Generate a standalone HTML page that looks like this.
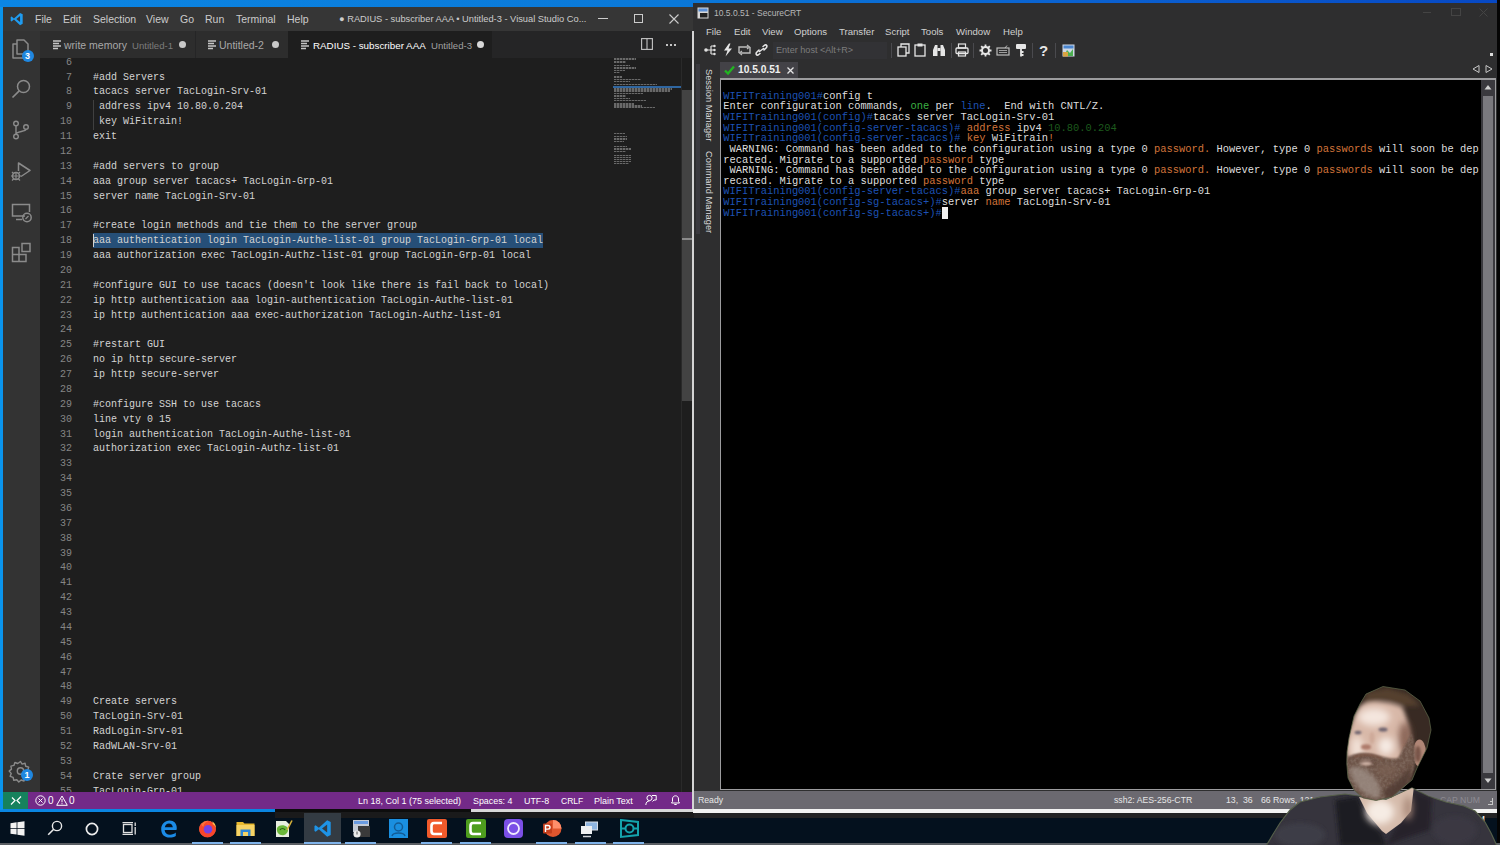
<!DOCTYPE html>
<html><head><meta charset="utf-8">
<style>
*{margin:0;padding:0;box-sizing:border-box}
html,body{width:1500px;height:845px;overflow:hidden;background:#0b1520;font-family:"Liberation Sans",sans-serif}
.a{position:absolute}
.ui{font-family:"Liberation Sans",sans-serif;white-space:pre;line-height:1}
svg{position:absolute;overflow:visible}
#topband{left:0;top:0;width:1500px;height:8px;background:linear-gradient(90deg,#0b86e4 0%,#0a78d8 45%,#0a5fd0 75%,#0748c4 100%)}
#vsleft{left:0;top:7px;width:2.5px;height:803px;background:#0a94ec}
#vstitle{left:3px;top:7px;width:690px;height:24px;background:#363636}
#vsact{left:3px;top:31px;width:37px;height:761px;background:#333333}
#vstabs{left:40px;top:31px;width:652px;height:27px;background:#252526}
#vsed{left:40px;top:58px;width:652px;height:734px;background:#1e1e1e;overflow:hidden}
#vsstatus{left:3px;top:792px;width:689px;height:17px;background:#732a88}
#crt{left:693px;top:3px;width:804px;height:810px;background:#2e2e2f}
#term{left:721px;top:80px;width:760px;height:709px;background:#000}
#taskbar{left:0;top:812px;width:1500px;height:31px;background:#04111e}
.menu{color:#cccccc;font-size:10.5px}
.code{font-family:"Liberation Mono",monospace;font-size:10px;line-height:14.875px;white-space:pre;color:#d4d4d4}
.lnum{font-family:"Liberation Mono",monospace;font-size:10px;line-height:14.875px;white-space:pre;color:#858585;text-align:right}
.tm{font-family:"Liberation Mono",monospace;font-size:10.41px;line-height:10.64px;white-space:pre;color:#dedede}
.b{color:#1d52b4}.o{color:#d2743a}.g{color:#3cb043}.dg{color:#1d5a1d}

</style></head><body>
<div id="topband" class="a"></div>
<div id="taskbar" class="a"></div>
<div class="a" style="left:0;top:843px;width:1500px;height:2px;background:#5a5e63"></div>
<div class="a" style="left:0;top:808px;width:275px;height:4px;background:#0a86e2"></div>
<div class="a" style="left:275px;top:808px;width:196px;height:4px;background:#0d0d0d"></div>
<div class="a" style="left:471px;top:809px;width:222px;height:3px;background:#d8d8d8"></div>
<div class="a" style="left:1497px;top:0;width:3px;height:843px;background:#050505"></div>
<div class="a" style="left:275px;top:812px;width:420px;height:6px;background:#1a1a1b"></div>
<div class="a" style="left:694px;top:813px;width:803px;height:5px;background:#222224"></div>
<div id="vsleft" class="a"></div>
<div id="vstitle" class="a"></div>
<div id="vsact" class="a"></div>
<div id="vstabs" class="a"></div>
<div id="vsed" class="a"></div>
<div id="vsstatus" class="a"></div>
<!-- title bar -->
<svg style="left:9.5px;top:11.5px" width="14" height="14" viewBox="0 0 16 16"><path d="M11.5 1 L14.5 2.5 V13.5 L11.5 15 L4.5 8.6 L1.8 10.8 L0.8 10.2 V5.8 L1.8 5.2 L4.5 7.4 Z M11.5 4.6 L7.2 8 L11.5 11.4 Z" fill="#1f9cf0"/></svg>
<div class="a ui menu" style="left:35px;top:14px">File</div>
<div class="a ui menu" style="left:63px;top:14px">Edit</div>
<div class="a ui menu" style="left:93px;top:14px">Selection</div>
<div class="a ui menu" style="left:146px;top:14px">View</div>
<div class="a ui menu" style="left:180px;top:14px">Go</div>
<div class="a ui menu" style="left:205px;top:14px">Run</div>
<div class="a ui menu" style="left:236px;top:14px">Terminal</div>
<div class="a ui menu" style="left:287px;top:14px">Help</div>
<div class="a ui menu" style="left:339px;top:14.5px;font-size:9.3px">● RADIUS - subscriber AAA • Untitled-3 - Visual Studio Co...</div>
<div class="a" style="left:598px;top:18px;width:10px;height:1px;background:#cccccc"></div>
<div class="a" style="left:634px;top:14px;width:9px;height:9px;border:1px solid #cccccc"></div>
<svg style="left:669px;top:14px" width="10" height="10" viewBox="0 0 10 10"><path d="M0.5 0.5 L9.5 9.5 M9.5 0.5 L0.5 9.5" stroke="#cccccc" stroke-width="1.1"/></svg>
<!-- tabs -->
<div class="a" style="left:40px;top:31px;width:155px;height:27px;background:#2d2d2d"></div>
<div class="a" style="left:195px;top:31px;width:1px;height:27px;background:#252526"></div>
<div class="a" style="left:196px;top:31px;width:92px;height:27px;background:#2d2d2d"></div>
<div class="a" style="left:288px;top:31px;width:205px;height:27px;background:#1e1e1e"></div>
<div class="a" style="left:492px;top:31px;width:1px;height:27px;background:#252526"></div>
<svg style="left:53px;top:40px" width="9" height="10" viewBox="0 0 9 10"><path d="M0 1h8M0 3.5h6M0 6h8M0 8.5h5" stroke="#c5c5c5" stroke-width="1.3"/></svg>
<div class="a ui" style="left:64px;top:40px;font-size:10.5px;color:#a8a8a8">write memory</div>
<div class="a ui" style="left:132px;top:40.5px;font-size:9.6px;color:#7c7c7c">Untitled-1</div>
<div class="a" style="left:179px;top:41px;width:7px;height:7px;border-radius:50%;background:#c9c9c9"></div>
<svg style="left:208px;top:40px" width="9" height="10" viewBox="0 0 9 10"><path d="M0 1h8M0 3.5h6M0 6h8M0 8.5h5" stroke="#c5c5c5" stroke-width="1.3"/></svg>
<div class="a ui" style="left:219px;top:40px;font-size:10.5px;color:#a8a8a8">Untitled-2</div>
<div class="a" style="left:272px;top:41px;width:7px;height:7px;border-radius:50%;background:#c9c9c9"></div>
<svg style="left:301px;top:40px" width="9" height="10" viewBox="0 0 9 10"><path d="M0 1h8M0 3.5h6M0 6h8M0 8.5h5" stroke="#c5c5c5" stroke-width="1.3"/></svg>
<div class="a ui" style="left:313px;top:40.5px;font-size:9.8px;color:#ffffff">RADIUS - subscriber AAA</div>
<div class="a ui" style="left:431px;top:40.5px;font-size:9.6px;color:#a0a0a0">Untitled-3</div>
<div class="a" style="left:477px;top:41px;width:7px;height:7px;border-radius:50%;background:#d8d8d8"></div>
<svg style="left:641px;top:38px" width="12" height="12" viewBox="0 0 12 12"><rect x="0.6" y="0.6" width="10.8" height="10.8" fill="none" stroke="#c5c5c5" stroke-width="1.1"/><path d="M6 0.6V11.4" stroke="#c5c5c5" stroke-width="1.1"/></svg>
<div class="a" style="left:666px;top:43.5px;width:2px;height:2px;background:#c5c5c5;box-shadow:4px 0 0 #c5c5c5,8px 0 0 #c5c5c5"></div>
<!-- activity bar icons -->
<svg style="left:11px;top:39px" width="20" height="20" viewBox="0 0 20 20"><path d="M6 1 h7 l4 4 v10 h-11 z M6 5 h-4 v14 h11 v-4" fill="none" stroke="#8b8b8b" stroke-width="1.5" stroke-linejoin="round"/></svg>
<div class="a" style="left:21.5px;top:50px;width:12px;height:12px;border-radius:50%;background:#1f87e0"></div>
<div class="a ui" style="left:21.5px;top:52px;width:12px;text-align:center;font-size:9px;color:#fff;font-weight:bold">3</div>
<svg style="left:11px;top:79px" width="20" height="20" viewBox="0 0 20 20"><circle cx="12.5" cy="7.5" r="6" fill="none" stroke="#8b8b8b" stroke-width="1.5"/><path d="M8.2 11.8 L1.5 18.5" stroke="#8b8b8b" stroke-width="1.7"/></svg>
<svg style="left:11px;top:120px" width="20" height="20" viewBox="0 0 20 20"><circle cx="5" cy="3.5" r="2.3" fill="none" stroke="#8b8b8b" stroke-width="1.4"/><circle cx="5" cy="16.5" r="2.3" fill="none" stroke="#8b8b8b" stroke-width="1.4"/><circle cx="15" cy="7" r="2.3" fill="none" stroke="#8b8b8b" stroke-width="1.4"/><path d="M5 5.8 V14.2 M15 9.3 C15 12 5 11 5 14.2" fill="none" stroke="#8b8b8b" stroke-width="1.4"/></svg>
<svg style="left:10px;top:161px" width="22" height="22" viewBox="0 0 22 22"><path d="M8.5 10 V2 L20 9.5 L11 15.5" fill="none" stroke="#8b8b8b" stroke-width="1.5" stroke-linejoin="round"/><circle cx="6" cy="15" r="3.5" fill="none" stroke="#8b8b8b" stroke-width="1.5"/><path d="M1 15h10M2 11l2 2M10 11l-2 2M2 19.5l2-2M10 19.5l-2-2M6 11.5v7" stroke="#8b8b8b" stroke-width="1.2"/></svg>
<svg style="left:11px;top:203px" width="22" height="20" viewBox="0 0 22 20"><path d="M14 13 H1.5 V1.5 H18.5 V9" fill="none" stroke="#8b8b8b" stroke-width="1.5"/><path d="M5 16.5 H11" stroke="#8b8b8b" stroke-width="1.5"/><circle cx="16" cy="14.5" r="4.2" fill="none" stroke="#8b8b8b" stroke-width="1.5"/><path d="M14.5 16 l3-3" stroke="#8b8b8b" stroke-width="1.2"/></svg>
<svg style="left:11px;top:242px" width="21" height="21" viewBox="0 0 21 21"><path d="M1.5 5.5 H8 V12.5 H15 V19.5 H1.5 Z M1.5 12.5 H8 V19.5" fill="none" stroke="#8b8b8b" stroke-width="1.5"/><rect x="11" y="1.5" width="8" height="8" fill="none" stroke="#8b8b8b" stroke-width="1.5"/></svg>
<svg style="left:10px;top:760px" width="21" height="21" viewBox="0 0 21 21"><path d="M10.5 1.5 l1.6 2.6 3-0.8 0.6 3 3 0.8-0.9 3 2 2.3-2.3 2 0.5 3-3 0.7-1 2.9-2.9-1-2.3 2-2-2.3-3 0.6-0.7-3-2.9-1 1-2.9-2-2.3 2.3-2-0.6-3 3-0.7 1-2.9 2.9 1z" fill="none" stroke="#8b8b8b" stroke-width="1.4" stroke-linejoin="round"/><circle cx="10.5" cy="11" r="3.2" fill="none" stroke="#8b8b8b" stroke-width="1.4"/></svg>
<div class="a" style="left:21px;top:769px;width:12px;height:12px;border-radius:50%;background:#1f87e0"></div>
<div class="a ui" style="left:21px;top:771px;width:12px;text-align:center;font-size:9px;color:#fff;font-weight:bold">1</div>
<!-- scrollbar -->
<div class="a" style="left:681px;top:58px;width:11px;height:734px;background:#1e1e1e;border-left:1px solid #2a2a2a"></div>
<div class="a" style="left:682px;top:90px;width:10px;height:311px;background:#434343"></div>
<div class="a" style="left:682px;top:238px;width:10px;height:2px;background:#8a8a8a"></div>
<div class="a" style="left:40px;top:58px;width:641px;height:734px;overflow:hidden">
<div class="a" style="left:53px;top:174.69px;width:450px;height:14.875px;background:#264f78"></div>
<div class="a" style="left:52.5px;top:175.69px;width:1px;height:12.875px;background:#d4d4d4"></div>
<div class="a" style="left:52.5px;top:42.31px;width:1px;height:29.75px;background:#404040"></div>
<div class="a lnum" style="left:0;top:-2.31px;width:32px">6
7
8
9
10
11
12
13
14
15
16
17
18
19
20
21
22
23
24
25
26
27
28
29
30
31
32
33
34
35
36
37
38
39
40
41
42
43
44
45
46
47
48
49
50
51
52
53
54
55
56</div>
<div class="a code" style="left:53px;top:-2.31px">
#add Servers
tacacs server TacLogin-Srv-01
 address ipv4 10.80.0.204
 key WiFitrain!
exit

#add servers to group
aaa group server tacacs+ TacLogin-Grp-01
server name TacLogin-Srv-01

#create login methods and tie them to the server group
aaa authentication login TacLogin-Authe-list-01 group TacLogin-Grp-01 local
aaa authorization exec TacLogin-Authz-list-01 group TacLogin-Grp-01 local

#configure GUI to use tacacs (doesn&#x27;t look like there is fail back to local)
ip http authentication aaa login-authentication TacLogin-Authe-list-01
ip http authentication aaa exec-authorization TacLogin-Authz-list-01

#restart GUI
no ip http secure-server
ip http secure-server

#configure SSH to use tacacs
line vty 0 15
login authentication TacLogin-Authe-list-01
authorization exec TacLogin-Authz-list-01
















Create servers
TacLogin-Srv-01
RadLogin-Srv-01
RadWLAN-Srv-01

Crate server group
TacLogin-Grp-01
</div>
</div>
<div class="a" style="left:614px;top:58px;width:22px;height:2px;background:repeating-linear-gradient(90deg,#b4b4b4 0 2px,#5a5a5a 2px 3px);opacity:.5"></div>
<div class="a" style="left:614px;top:61px;width:12px;height:1.5px;background:repeating-linear-gradient(90deg,#b4b4b4 0 2px,#5a5a5a 2px 3px);opacity:.5"></div>
<div class="a" style="left:614px;top:64.5px;width:16px;height:1.5px;background:repeating-linear-gradient(90deg,#b4b4b4 0 2px,#5a5a5a 2px 3px);opacity:.5"></div>
<div class="a" style="left:614px;top:67px;width:22px;height:1.5px;background:repeating-linear-gradient(90deg,#b4b4b4 0 2px,#5a5a5a 2px 3px);opacity:.5"></div>
<div class="a" style="left:614px;top:69.5px;width:11px;height:1.5px;background:repeating-linear-gradient(90deg,#b4b4b4 0 2px,#5a5a5a 2px 3px);opacity:.5"></div>
<div class="a" style="left:614px;top:71.5px;width:6px;height:1px;background:repeating-linear-gradient(90deg,#b4b4b4 0 2px,#5a5a5a 2px 3px);opacity:.5"></div>
<div class="a" style="left:614px;top:76px;width:8px;height:1.5px;background:repeating-linear-gradient(90deg,#b4b4b4 0 2px,#5a5a5a 2px 3px);opacity:.5"></div>
<div class="a" style="left:614px;top:78.5px;width:27px;height:1.5px;background:repeating-linear-gradient(90deg,#b4b4b4 0 2px,#5a5a5a 2px 3px);opacity:.5"></div>
<div class="a" style="left:614px;top:80.5px;width:16px;height:1.5px;background:repeating-linear-gradient(90deg,#b4b4b4 0 2px,#5a5a5a 2px 3px);opacity:.5"></div>
<div class="a" style="left:614px;top:83.5px;width:43px;height:1.5px;background:repeating-linear-gradient(90deg,#b4b4b4 0 2px,#5a5a5a 2px 3px);opacity:.5"></div>
<div class="a" style="left:614px;top:88px;width:58px;height:1.5px;background:repeating-linear-gradient(90deg,#b4b4b4 0 2px,#5a5a5a 2px 3px);opacity:.5"></div>
<div class="a" style="left:614px;top:90px;width:56px;height:1.5px;background:repeating-linear-gradient(90deg,#b4b4b4 0 2px,#5a5a5a 2px 3px);opacity:.5"></div>
<div class="a" style="left:614px;top:92.5px;width:29px;height:1px;background:repeating-linear-gradient(90deg,#b4b4b4 0 2px,#5a5a5a 2px 3px);opacity:.5"></div>
<div class="a" style="left:614px;top:95px;width:12px;height:1.5px;background:repeating-linear-gradient(90deg,#b4b4b4 0 2px,#5a5a5a 2px 3px);opacity:.5"></div>
<div class="a" style="left:614px;top:97.5px;width:16px;height:1.5px;background:repeating-linear-gradient(90deg,#b4b4b4 0 2px,#5a5a5a 2px 3px);opacity:.5"></div>
<div class="a" style="left:614px;top:99.5px;width:32px;height:1.5px;background:repeating-linear-gradient(90deg,#b4b4b4 0 2px,#5a5a5a 2px 3px);opacity:.5"></div>
<div class="a" style="left:614px;top:103px;width:20px;height:1.5px;background:repeating-linear-gradient(90deg,#b4b4b4 0 2px,#5a5a5a 2px 3px);opacity:.5"></div>
<div class="a" style="left:614px;top:105px;width:28px;height:1.5px;background:repeating-linear-gradient(90deg,#b4b4b4 0 2px,#5a5a5a 2px 3px);opacity:.5"></div>
<div class="a" style="left:614px;top:107px;width:41px;height:1px;background:repeating-linear-gradient(90deg,#b4b4b4 0 2px,#5a5a5a 2px 3px);opacity:.5"></div>
<div class="a" style="left:614px;top:132.5px;width:11px;height:1.5px;background:repeating-linear-gradient(90deg,#b4b4b4 0 2px,#5a5a5a 2px 3px);opacity:.5"></div>
<div class="a" style="left:614px;top:135.5px;width:13px;height:1.5px;background:repeating-linear-gradient(90deg,#b4b4b4 0 2px,#5a5a5a 2px 3px);opacity:.5"></div>
<div class="a" style="left:614px;top:138px;width:13px;height:1.5px;background:repeating-linear-gradient(90deg,#b4b4b4 0 2px,#5a5a5a 2px 3px);opacity:.5"></div>
<div class="a" style="left:614px;top:140.5px;width:10px;height:1.5px;background:repeating-linear-gradient(90deg,#b4b4b4 0 2px,#5a5a5a 2px 3px);opacity:.5"></div>
<div class="a" style="left:614px;top:145.5px;width:13px;height:1.5px;background:repeating-linear-gradient(90deg,#b4b4b4 0 2px,#5a5a5a 2px 3px);opacity:.5"></div>
<div class="a" style="left:614px;top:148px;width:17px;height:1.5px;background:repeating-linear-gradient(90deg,#b4b4b4 0 2px,#5a5a5a 2px 3px);opacity:.5"></div>
<div class="a" style="left:614px;top:150.5px;width:12px;height:1.5px;background:repeating-linear-gradient(90deg,#b4b4b4 0 2px,#5a5a5a 2px 3px);opacity:.5"></div>
<div class="a" style="left:614px;top:154.5px;width:17px;height:1.5px;background:repeating-linear-gradient(90deg,#b4b4b4 0 2px,#5a5a5a 2px 3px);opacity:.5"></div>
<div class="a" style="left:614px;top:156.5px;width:17px;height:1.5px;background:repeating-linear-gradient(90deg,#b4b4b4 0 2px,#5a5a5a 2px 3px);opacity:.5"></div>
<div class="a" style="left:614px;top:158.5px;width:17px;height:1.5px;background:repeating-linear-gradient(90deg,#b4b4b4 0 2px,#5a5a5a 2px 3px);opacity:.5"></div>
<div class="a" style="left:614px;top:160.5px;width:17px;height:1.5px;background:repeating-linear-gradient(90deg,#b4b4b4 0 2px,#5a5a5a 2px 3px);opacity:.5"></div>
<div class="a" style="left:614px;top:162.5px;width:15px;height:1.5px;background:repeating-linear-gradient(90deg,#b4b4b4 0 2px,#5a5a5a 2px 3px);opacity:.5"></div>
<div class="a" style="left:613px;top:86px;width:68px;height:1.5px;background:#2f66a0"></div>
<div class="a" style="left:3px;top:792px;width:25px;height:17px;background:#16825d"></div>
<svg style="left:10px;top:795px" width="12" height="11" viewBox="0 0 12 11"><path d="M1 9.5 L5 5.5 L2 2.5 M11 1.5 L7 5.5 L10 8.5" fill="none" stroke="#ffffff" stroke-width="1.2"/></svg>
<svg style="left:35px;top:795px" width="11" height="11" viewBox="0 0 11 11"><circle cx="5.5" cy="5.5" r="4.7" fill="none" stroke="#fff" stroke-width="1"/><path d="M3.5 3.5l4 4M7.5 3.5l-4 4" stroke="#fff" stroke-width="1"/></svg>
<div class="a ui" style="left:48px;top:795.5px;font-size:10px;color:#fff">0</div>
<svg style="left:56px;top:794.5px" width="12" height="11" viewBox="0 0 12 11"><path d="M6 1 L11.3 10.3 H0.7 Z" fill="none" stroke="#fff" stroke-width="1"/><path d="M6 4v3.3M6 8.2v1" stroke="#fff" stroke-width="1"/></svg>
<div class="a ui" style="left:69px;top:795.5px;font-size:10px;color:#fff">0</div>
<div class="a ui" style="left:358px;top:797px;font-size:9px;color:#fff">Ln 18, Col 1 (75 selected)</div>
<div class="a ui" style="left:473px;top:797px;font-size:8.9px;color:#fff">Spaces: 4</div>
<div class="a ui" style="left:524px;top:797px;font-size:8.9px;color:#fff">UTF-8</div>
<div class="a ui" style="left:561px;top:797px;font-size:8.5px;color:#fff">CRLF</div>
<div class="a ui" style="left:594px;top:797px;font-size:9px;color:#fff">Plain Text</div>
<svg style="left:645px;top:794px" width="12" height="12" viewBox="0 0 12 12"><circle cx="4.5" cy="4" r="2.6" fill="none" stroke="#fff" stroke-width="1"/><path d="M0.8 11 C1 8 2.5 7 4.5 7 M7 1.5 H11.2 V6 H9 L7.5 7.5" fill="none" stroke="#fff" stroke-width="1"/></svg>
<svg style="left:670px;top:794px" width="11" height="12" viewBox="0 0 11 12"><path d="M1.5 9 H9.5 L8.5 7.5 V5 C8.5 3 7.2 1.8 5.5 1.8 C3.8 1.8 2.5 3 2.5 5 V7.5 Z M4.3 10.5 H6.7" fill="none" stroke="#fff" stroke-width="1"/></svg>
<div id="crt" class="a"></div>
<div class="a" style="left:692px;top:31px;width:1.6px;height:778px;background:#d4d4d4"></div>
<!-- title -->
<svg style="left:697px;top:7px" width="12" height="12" viewBox="0 0 12 12"><rect x="0.5" y="0.5" width="11" height="11" fill="#d8d8d8"/><rect x="1.5" y="1.5" width="9" height="3" fill="#5b8fd6"/><rect x="3" y="6" width="7.5" height="4.5" fill="#222"/></svg>
<div class="a ui" style="left:714px;top:9px;font-size:8.5px;color:#b8b8b8">10.5.0.51 - SecureCRT</div>
<div class="a" style="left:1423px;top:12px;width:8px;height:1px;background:#444"></div>
<div class="a" style="left:1451px;top:8px;width:10px;height:8px;border:1px solid #444"></div>
<svg style="left:1479px;top:8px" width="9" height="9" viewBox="0 0 9 9"><path d="M0.5 0.5l8 8M8.5 0.5l-8 8" stroke="#444" stroke-width="1"/></svg>
<!-- menu -->
<div class="a ui" style="left:706px;top:27px;font-size:9.6px;color:#d0d0d0">File</div>
<div class="a ui" style="left:734px;top:27px;font-size:9.6px;color:#d0d0d0">Edit</div>
<div class="a ui" style="left:762px;top:27px;font-size:9.6px;color:#d0d0d0">View</div>
<div class="a ui" style="left:794px;top:27px;font-size:9.6px;color:#d0d0d0">Options</div>
<div class="a ui" style="left:839px;top:27px;font-size:9.6px;color:#d0d0d0">Transfer</div>
<div class="a ui" style="left:885px;top:27px;font-size:9.6px;color:#d0d0d0">Script</div>
<div class="a ui" style="left:921px;top:27px;font-size:9.6px;color:#d0d0d0">Tools</div>
<div class="a ui" style="left:956px;top:27px;font-size:9.6px;color:#d0d0d0">Window</div>
<div class="a ui" style="left:1003px;top:27px;font-size:9.6px;color:#d0d0d0">Help</div>
<!-- toolbar -->
<svg style="left:704px;top:44px" width="12" height="12" viewBox="0 0 12 12"><circle cx="2" cy="6" r="1.8" fill="#e0e0e0"/><path d="M3 6H7M7 2V10M7 2H10M7 6H10M7 10H10" stroke="#e0e0e0" stroke-width="1.2" fill="none"/><circle cx="10.5" cy="2" r="1.2" fill="#e0e0e0"/><circle cx="10.5" cy="6" r="1.2" fill="#e0e0e0"/><circle cx="10.5" cy="10" r="1.2" fill="#e0e0e0"/></svg>
<svg style="left:723px;top:43px" width="10" height="14" viewBox="0 0 10 14"><path d="M6 0.5 L1 7.5 H4.5 L2.5 13.5 L9 5.5 H5.5 L7.5 0.5Z" fill="#e6e6e6"/></svg>
<svg style="left:737px;top:44px" width="15" height="12" viewBox="0 0 15 12"><path d="M2 9V3H11M13 3V9H4" fill="none" stroke="#bdbdbd" stroke-width="1.4"/><path d="M10 1L12.5 3L10 5M5 7L2.5 9L5 11" fill="none" stroke="#bdbdbd" stroke-width="1.2"/></svg>
<svg style="left:755px;top:44px" width="13" height="12" viewBox="0 0 13 12"><path d="M5 9.5 L3 11 C1.5 11.5 0.5 10 1.5 8.5 L4 6 M8 2.5 L10 1 C11.5 0.5 12.5 2 11.5 3.5 L9 6 M4.5 7.5 L8.5 4.5" fill="none" stroke="#e6e6e6" stroke-width="1.5" stroke-linecap="round"/></svg>
<div class="a" style="left:773px;top:42px;width:114px;height:17px;background:#323235"></div>
<div class="a ui" style="left:776px;top:46px;font-size:9.1px;color:#7d7d7d">Enter host &lt;Alt+R&gt;</div>
<div class="a" style="left:891px;top:43px;width:1px;height:15px;background:#4a4a4e"></div>
<svg style="left:897px;top:43px" width="13" height="14" viewBox="0 0 13 14"><path d="M4 4 V1 H12 V10 H9" fill="none" stroke="#e6e6e6" stroke-width="1.3"/><rect x="1" y="4" width="8" height="9" fill="none" stroke="#e6e6e6" stroke-width="1.3"/></svg>
<svg style="left:914px;top:43px" width="12" height="14" viewBox="0 0 12 14"><rect x="1" y="2" width="10" height="11" fill="none" stroke="#e6e6e6" stroke-width="1.3"/><rect x="3.5" y="0.5" width="5" height="3" fill="#e6e6e6"/></svg>
<svg style="left:932px;top:43px" width="14" height="14" viewBox="0 0 14 14"><path d="M1 13V7L3 2H5.5V13ZM13 13V7L11 2H8.5V13Z" fill="#e6e6e6"/><rect x="5.5" y="5" width="3" height="3" fill="#e6e6e6"/></svg>
<div class="a" style="left:951px;top:43px;width:1px;height:15px;background:#4a4a4e"></div>
<svg style="left:955px;top:43px" width="14" height="14" viewBox="0 0 14 14"><rect x="3.5" y="1" width="7" height="4" fill="none" stroke="#e6e6e6" stroke-width="1.2"/><rect x="1" y="5" width="12" height="5.5" rx="1" fill="none" stroke="#e6e6e6" stroke-width="1.3"/><rect x="3.5" y="9" width="7" height="4" fill="none" stroke="#e6e6e6" stroke-width="1.2"/></svg>
<div class="a" style="left:973px;top:43px;width:1px;height:15px;background:#4a4a4e"></div>
<svg style="left:979px;top:44px" width="13" height="13" viewBox="0 0 13 13"><circle cx="6.5" cy="6.5" r="3.5" fill="none" stroke="#e6e6e6" stroke-width="2"/><path d="M6.5 0.5V3M6.5 10V12.5M0.5 6.5H3M10 6.5H12.5M2.2 2.2L4 4M9 9L10.8 10.8M2.2 10.8L4 9M9 4L10.8 2.2" stroke="#e6e6e6" stroke-width="1.8"/></svg>
<svg style="left:996px;top:45px" width="14" height="11" viewBox="0 0 14 11"><rect x="1" y="3" width="12" height="7" fill="none" stroke="#bdbdbd" stroke-width="1.2"/><path d="M3 5.5h8M3 7.5h8" stroke="#bdbdbd" stroke-width="0.8"/><path d="M9 3 L11 0.5" stroke="#bdbdbd" stroke-width="1"/></svg>
<svg style="left:1015px;top:43px" width="12" height="14" viewBox="0 0 12 14"><rect x="1" y="1" width="10" height="5" rx="1" fill="#e6e6e6"/><path d="M6 6V13.5M6 9H8.5M6 12H8.5" stroke="#e6e6e6" stroke-width="1.8"/></svg>
<div class="a" style="left:1032px;top:43px;width:1px;height:15px;background:#4a4a4e"></div>
<div class="a ui" style="left:1039px;top:43px;font-size:15px;font-weight:bold;color:#e6e6e6">?</div>
<div class="a" style="left:1055px;top:43px;width:1px;height:15px;background:#4a4a4e"></div>
<svg style="left:1062px;top:44px" width="13" height="13" viewBox="0 0 13 13"><rect x="0.5" y="0.5" width="12" height="12" fill="#cfd8e6"/><rect x="1.5" y="1.5" width="10" height="3" fill="#4a86d0"/><path d="M2 12 L5 6 L8 9 L11 5 V12Z" fill="#4caf50"/><rect x="1" y="8" width="5" height="4.5" fill="#d9a441"/></svg>
<!-- right nav -->
<div class="a" style="left:1490px;top:53px;width:3px;height:3px;background:#ddd"></div>
<svg style="left:1472px;top:65px" width="8" height="8" viewBox="0 0 8 8"><path d="M7 0.5V7.5L1 4Z" fill="none" stroke="#c8c8c8" stroke-width="1"/></svg>
<svg style="left:1485px;top:65px" width="8" height="8" viewBox="0 0 8 8"><path d="M1 0.5V7.5L7 4Z" fill="none" stroke="#c8c8c8" stroke-width="1"/></svg>
<!-- sidebar -->
<div class="a" style="left:696px;top:64px;width:4px;height:170px;background:#3a393e"></div>
<div class="a ui" style="left:701.5px;top:69px;font-size:9.3px;color:#dcdcdc;transform-origin:0 0;transform:translate(11px,0) rotate(90deg)">Session Manager</div>
<div class="a ui" style="left:701.5px;top:151px;font-size:9.3px;color:#dcdcdc;transform-origin:0 0;transform:translate(11px,0) rotate(90deg)">Command Manager</div>
<!-- tab -->
<div class="a" style="left:720px;top:62px;width:78px;height:16px;background:#434247"></div>
<svg style="left:724px;top:65px" width="11" height="10" viewBox="0 0 11 10"><path d="M1 5.5 L4 8.5 L10 1.5" fill="none" stroke="#21b521" stroke-width="2.3"/></svg>
<div class="a ui" style="left:738px;top:65px;font-size:10.2px;font-weight:bold;color:#f0f0f0">10.5.0.51</div>
<svg style="left:787px;top:67px" width="7" height="7" viewBox="0 0 7 7"><path d="M0.5 0.5l6 6M6.5 0.5l-6 6" stroke="#e6e6e6" stroke-width="1.3"/></svg>
<!-- terminal frame -->
<div class="a" style="left:719.5px;top:78px;width:776.5px;height:712px;background:#9c9c9e"></div>
<div id="term" class="a"></div>
<div class="a" style="left:1481px;top:80px;width:14px;height:709px;background:#3a393e"></div>
<div class="a" style="left:1483px;top:96px;width:10px;height:677px;background:#7a797e"></div>
<svg style="left:1484px;top:84px" width="8" height="6" viewBox="0 0 8 6"><path d="M0.5 5.5 L4 1 L7.5 5.5Z" fill="#d0d0d0"/></svg>
<svg style="left:1484px;top:778px" width="8" height="6" viewBox="0 0 8 6"><path d="M0.5 0.5 L4 5 L7.5 0.5Z" fill="#d0d0d0"/></svg>
<!-- status bar -->
<div class="a" style="left:694px;top:791px;width:803px;height:18px;background:#6b6970"></div>
<div class="a" style="left:693px;top:809px;width:804px;height:4px;background:#f2f2f2"></div>
<div class="a ui" style="left:698px;top:795.5px;font-size:8.7px;color:#e6e6e6">Ready</div>
<div class="a ui" style="left:1114px;top:795.5px;font-size:8.7px;color:#e6e6e6">ssh2: AES-256-CTR</div>
<div class="a ui" style="left:1226px;top:795.5px;font-size:8.7px;color:#e6e6e6">13,  36</div>
<div class="a ui" style="left:1261px;top:795.5px;font-size:8.7px;color:#e6e6e6">66 Rows, 121 Cols</div>
<div class="a ui" style="left:1338px;top:795.5px;font-size:8.7px;color:#e6e6e6">VT100</div>
<div class="a ui" style="left:1440px;top:795.5px;font-size:8.7px;color:#8d8b92">CAP NUM</div>
<div class="a" style="left:1488px;top:804px;width:5px;height:1px;background:#c8c8c8"></div>
<div class="a" style="left:1490px;top:801px;width:3px;height:1px;background:#c8c8c8"></div>
<div class="a" style="left:1492px;top:798px;width:1px;height:6px;background:#c8c8c8"></div>
<div class="a tm" style="left:723.2px;top:90.68px"><span class="b">WIFITraining001#</span>config t
Enter configuration commands, <span class="g">one</span> per <span class="b">line</span>.  End with CNTL/Z.
<span class="b">WIFITraining001(config)#</span>tacacs server TacLogin-Srv-01
<span class="b">WIFITraining001(config-server-tacacs)#</span> <span class="o">address</span> ipv4 <span class="dg">10.80.0.204</span>
<span class="b">WIFITraining001(config-server-tacacs)#</span> <span class="o">key</span> WiFitrain<span class="o">!</span>
 WARNING: Command has been added to the configuration using a type 0 <span class="o">password.</span> However, type 0 <span class="o">passwords</span> will soon be dep
recated. Migrate to a supported <span class="o">password</span> type
 WARNING: Command has been added to the configuration using a type 0 <span class="o">password.</span> However, type 0 <span class="o">passwords</span> will soon be dep
recated. Migrate to a supported <span class="o">password</span> type
<span class="b">WIFITraining001(config-server-tacacs)#</span><span class="o">aaa</span> group server tacacs+ TacLogin-Grp-01
<span class="b">WIFITraining001(config-sg-tacacs+)#</span>server <span class="o">name</span> TacLogin-Srv-01
<span class="b">WIFITraining001(config-sg-tacacs+)#</span><span style="background:#f0f0f0">&#160;</span></div>
<!-- taskbar icons -->
<svg style="left:10px;top:821px" width="15" height="15" viewBox="0 0 15 15"><path d="M0.5 2.2 L6.6 1.3 V7 H0.5Z M7.4 1.2 L14.5 0.2 V7 H7.4Z M0.5 7.8 H6.6 V13.6 L0.5 12.8Z M7.4 7.8 H14.5 V14.8 L7.4 13.8Z" fill="#f2f2f2"/></svg>
<svg style="left:47px;top:820px" width="16" height="16" viewBox="0 0 16 16"><circle cx="10" cy="6" r="4.6" fill="none" stroke="#e8e8e8" stroke-width="1.4"/><path d="M6.7 9.3 L1.2 14.8" stroke="#e8e8e8" stroke-width="1.6"/></svg>
<svg style="left:85px;top:822px" width="14" height="14" viewBox="0 0 14 14"><circle cx="7" cy="7" r="5.6" fill="none" stroke="#ececec" stroke-width="1.7"/></svg>
<svg style="left:122px;top:822px" width="15" height="13" viewBox="0 0 15 13"><rect x="1.5" y="2.5" width="8.5" height="8" fill="none" stroke="#e0e0e0" stroke-width="1.3"/><path d="M0.5 0.7 H11 M0.5 12.3 H11 M13.2 0.5 V4 M13.2 5 V12.5" stroke="#e0e0e0" stroke-width="1.3"/></svg>
<svg style="left:160px;top:820px" width="18" height="18" viewBox="0 0 18 18"><path d="M16.5 10 H4.6 C4.8 13 7 14.8 10 14.8 C12.4 14.8 14.3 13.9 15.8 12.6 V16 C14.2 17.1 12 17.6 9.6 17.6 C4.6 17.6 1.2 14.4 1.2 9.2 C1.2 4.3 4.8 0.6 9.6 0.6 C14 0.6 16.8 3.6 16.8 8.2 Z M4.8 7.3 H12.8 C12.6 4.9 11.2 3.5 9 3.5 C6.8 3.5 5.2 5 4.8 7.3Z" fill="#1b8be6"/></svg>
<svg style="left:198px;top:819px" width="19" height="19" viewBox="0 0 19 19"><circle cx="9.5" cy="10" r="8.3" fill="#ff7139"/><path d="M9.5 1.7 C14 1.7 17.8 5.5 17.8 10 C17.8 14.6 14 18.3 9.5 18.3 C5 18.3 1.2 14.6 1.2 10 C1.2 8 1.9 6.2 3.2 4.8 C3.5 6.5 4.6 7.5 5.5 7.8 C5.5 5 7.6 3 10.5 2.6 C9.3 3.8 9.6 5 10.4 5.6 Z" fill="#f9462b"/><circle cx="10" cy="10.3" r="4.3" fill="#7542e5"/><path d="M14 2.2 C16.5 3.6 18 6.2 18 9 C17 6.8 15.5 5.5 14.5 5 C15 4 14.8 3 14 2.2Z" fill="#ffbd4f"/></svg>
<div class="a" style="left:192px;top:842px;width:31px;height:1.5px;background:#7fb3ea"></div>
<svg style="left:236px;top:820px" width="19" height="17" viewBox="0 0 19 17"><path d="M0.5 2 H7 L8.5 3.5 H18.5 V16 H0.5Z" fill="#e8b92f"/><rect x="0.5" y="5" width="18" height="11" fill="#f6d365"/><path d="M4.5 9.5 H14.5 V16 H12 V12 H7 V16 H4.5Z" fill="#2f86d6"/></svg>
<div class="a" style="left:230px;top:842px;width:31px;height:1.5px;background:#7fb3ea"></div>
<svg style="left:275px;top:819px" width="18" height="19" viewBox="0 0 18 19"><path d="M1 2 H11 L14 5 V18 H1Z" fill="#e8eee0"/><path d="M2 9 C3 6 9 5 12 8 C14 10 13 15 9 16 C5 17 1 14 2 9Z" fill="#6bb83a"/><path d="M5 11 C6 9 9 9 10 11" stroke="#2c5e1a" stroke-width="1.2" fill="none"/><path d="M12 11 L17 1.5" stroke="#d8b23a" stroke-width="1.6"/></svg>
<div class="a" style="left:304px;top:813px;width:37px;height:30px;background:#333b43"></div>
<svg style="left:313px;top:819px" width="20" height="19" viewBox="0 0 16 16"><path d="M11.5 1 L14.5 2.5 V13.5 L11.5 15 L4.5 8.6 L1.8 10.8 L0.8 10.2 V5.8 L1.8 5.2 L4.5 7.4 Z M11.5 4.6 L7.2 8 L11.5 11.4 Z" fill="#1e93e6"/></svg>
<div class="a" style="left:304px;top:841.5px;width:37px;height:2px;background:#7fb3ea"></div>
<svg style="left:352px;top:819px" width="19" height="19" viewBox="0 0 19 19"><rect x="1" y="1" width="16" height="12" fill="#c4cad4"/><rect x="2" y="2" width="14" height="3" fill="#6a9be0"/><rect x="6" y="7" width="12" height="11" fill="#3a3a3a"/><circle cx="5" cy="15" r="3.6" fill="#eaeaea"/><path d="M5 12.5 V15.5" stroke="#555" stroke-width="1"/></svg>
<div class="a" style="left:345px;top:842px;width:31px;height:1.5px;background:#7fb3ea"></div>
<svg style="left:389px;top:819px" width="19" height="19" viewBox="0 0 19 19"><rect x="0" y="0" width="19" height="19" fill="#1a8fe0"/><circle cx="9.5" cy="8" r="4" fill="none" stroke="#135c96" stroke-width="1.5"/><path d="M3 17 C4 13 15 13 16 17" stroke="#135c96" stroke-width="1.5" fill="none"/></svg>
<svg style="left:427px;top:819px" width="20" height="19" viewBox="0 0 20 19"><rect x="0" y="0" width="20" height="19" rx="2" fill="#f15a2b"/><path d="M15 4 H7 C5 4 4.5 5 4.5 7 V12 C4.5 14 5 15 7 15 H15" stroke="#ffffff" stroke-width="2.6" fill="none"/></svg>
<div class="a" style="left:421px;top:842px;width:31px;height:1.5px;background:#7fb3ea"></div>
<svg style="left:466px;top:819px" width="20" height="19" viewBox="0 0 20 19"><rect x="0" y="0" width="20" height="19" rx="2" fill="#4e9d1e"/><path d="M15 4 H7 C5 4 4.5 5 4.5 7 V12 C4.5 14 5 15 7 15 H15" stroke="#ffffff" stroke-width="2.6" fill="none"/></svg>
<div class="a" style="left:460px;top:842px;width:31px;height:1.5px;background:#7fb3ea"></div>
<svg style="left:504px;top:819px" width="19" height="19" viewBox="0 0 19 19"><rect x="0" y="0" width="19" height="19" rx="4" fill="#7b4fe6"/><circle cx="9.5" cy="9.5" r="5.5" fill="none" stroke="#f0eaff" stroke-width="1.8"/></svg>
<svg style="left:542px;top:819px" width="20" height="19" viewBox="0 0 20 19"><circle cx="11" cy="9.5" r="8.5" fill="#e0562e"/><path d="M11 1 A8.5 8.5 0 0 1 19.5 9.5 H11Z" fill="#ff8f6b"/><rect x="1" y="4.5" width="9" height="10" rx="1" fill="#c43e1c"/><path d="M3.5 13 V6.5 H6 C7.6 6.5 8 7.3 8 8.3 C8 9.3 7.6 10.1 6 10.1 H3.5" stroke="#fff" stroke-width="1.4" fill="none"/></svg>
<div class="a" style="left:536px;top:842px;width:31px;height:1.5px;background:#7fb3ea"></div>
<svg style="left:580px;top:821px" width="19" height="16" viewBox="0 0 19 16"><rect x="5" y="0.5" width="13" height="9" fill="#d8dde4"/><rect x="6" y="1.5" width="11" height="7" fill="#8fb5e0"/><rect x="1" y="5" width="11" height="8" fill="#eef0f2"/><path d="M3 15.5 H11" stroke="#cfd3d8" stroke-width="1.5"/></svg>
<div class="a" style="left:575px;top:842px;width:31px;height:1.5px;background:#7fb3ea"></div>
<svg style="left:620px;top:819px" width="19" height="19" viewBox="0 0 19 19"><path d="M1 1 L18 3 V16 L1 18Z" fill="none" stroke="#14a3ac" stroke-width="2"/><circle cx="9.5" cy="9.5" r="4" fill="none" stroke="#14a3ac" stroke-width="2"/><path d="M1 9.5 H5.5 M13.5 9.5 H18" stroke="#14a3ac" stroke-width="2"/></svg>
<div class="a" style="left:613px;top:842px;width:31px;height:1.5px;background:#7fb3ea"></div>
<div class="a ui" style="left:1470px;top:816px;font-size:10px;color:#f0f0f0">PM</div>
<div class="a ui" style="left:1468px;top:832px;font-size:10px;color:#f0f0f0">2020</div>
<svg style="left:1250px;top:670px" width="250" height="175" viewBox="1250 670 250 175">
<defs>
<filter id="bl" x="-20%" y="-20%" width="140%" height="140%"><feGaussianBlur stdDeviation="0.7"/></filter>
<filter id="bl2" x="-50%" y="-50%" width="200%" height="200%"><feGaussianBlur stdDeviation="3.5"/></filter>
<filter id="bl3" x="-50%" y="-50%" width="200%" height="200%"><feGaussianBlur stdDeviation="1.3"/></filter>
<filter id="bl4" x="-50%" y="-50%" width="200%" height="200%"><feGaussianBlur stdDeviation="2.2"/></filter>
<filter id="noise" x="0" y="0" width="100%" height="100%"><feTurbulence type="fractalNoise" baseFrequency="0.35" numOctaves="2" seed="3"/><feColorMatrix type="matrix" values="0 0 0 0 0.45  0 0 0 0 0.38  0 0 0 0 0.33  0 0 0 1.6 -0.55"/></filter>
<clipPath id="headclip"><path d="M1360 704 L1366 694 L1383 686.5 L1405 690 L1420 701 L1429 718 L1431 730 L1427 748 L1417 768 L1412 780 L1406 785 L1392 797 L1376 800.5 L1363 798 L1354 790 L1348 778 L1346.8 764 L1347 752 L1349 738 L1354 716 Z"/></clipPath>
<clipPath id="beardclip"><path d="M1346 758 C1352 754 1362 752 1372 754 C1382 756 1390 760 1398 758 C1404 748 1408 738 1412 734 C1416 748 1416 764 1413 772 C1410 784 1404 792 1392 797 L1376 801 L1362 798 C1354 792 1349 784 1347 774 Z"/></clipPath>
<clipPath id="shirtclip"><path d="M1266 846 L1272 836 L1280 823 L1290 810 L1300 802 L1320 797 L1345 794 L1386 800 L1412 788 L1428 796 L1446 802 L1464 806 L1475 811 L1485 822 L1491 833 L1497 846 Z"/></clipPath>
</defs>
<!-- shirt -->
<path d="M1266 846 L1272 836 L1280 823 L1290 810 L1300 802 L1320 797 L1345 794 L1386 800 L1412 788 L1428 796 L1446 802 L1464 806 L1475 811 L1485 822 L1491 833 L1497 846 Z" fill="#36343d" stroke="#56604a" stroke-width="1.2"/>
<g clip-path="url(#shirtclip)">
<g filter="url(#bl4)">
<path d="M1335 800 L1358 796 L1366 818 L1382 834 L1386 846 L1340 846 Z" fill="#1f1e24"/>
<path d="M1412 790 L1432 798 L1430 830 L1400 840 L1386 846 L1395 828 L1410 812 Z" fill="#25242a"/>
<ellipse cx="1300" cy="835" rx="25" ry="12" fill="#3e3c46"/>
<ellipse cx="1455" cy="830" rx="22" ry="14" fill="#3b3943"/>
</g>
<path d="M1359 797 L1367 813 L1382 831 L1386 834 L1401 823 L1411 811 L1414 786 L1392 797 L1376 800 Z" fill="#d6bcac" filter="url(#bl)"/>
<g filter="url(#bl2)"><ellipse cx="1380" cy="812" rx="14" ry="12" fill="#f6ece4"/><ellipse cx="1408" cy="808" rx="4" ry="12" fill="#a88878"/></g>
</g>
<!-- head -->
<g clip-path="url(#headclip)">
<rect x="1340" y="680" width="100" height="125" fill="#382a23"/>
<g filter="url(#bl4)">
<path d="M1366 692 L1388 688 L1410 695 L1420 706 L1404 706 L1384 700 L1364 704Z" fill="#54402f"/>
<path d="M1361 705 C1372 700 1388 701 1402 707 C1407 716 1410 730 1411 745 C1411 758 1406 768 1396 774 L1358 774 C1350 768 1346 760 1346.5 748 C1347 734 1352 718 1361 705 Z" fill="#d8b8a8"/>
</g>
<g filter="url(#bl2)">
<ellipse cx="1374" cy="717" rx="16" ry="9" fill="#f4e6de"/>
<ellipse cx="1386" cy="746" rx="8" ry="9" fill="#f6ebe4"/>
<ellipse cx="1357" cy="748" rx="6" ry="12" fill="#f2e2d8"/>
<ellipse cx="1405" cy="738" rx="6" ry="16" fill="#7a5446" opacity="0.85"/>
</g>
<ellipse cx="1419.5" cy="753" rx="6.5" ry="13.5" fill="#b08676" filter="url(#bl)"/>
<ellipse cx="1418" cy="754" rx="2.8" ry="8" fill="#785548" filter="url(#bl3)"/>
<g filter="url(#bl3)">
<ellipse cx="1358" cy="732.5" rx="3.5" ry="1.8" fill="#6e6470"/>
<ellipse cx="1383" cy="729.5" rx="4.5" ry="2" fill="#6e6470"/>
<ellipse cx="1366" cy="747" rx="5" ry="2.8" fill="#a87464" opacity="0.9"/><ellipse cx="1372" cy="738" rx="2.5" ry="6" fill="#c8a090" opacity="0.6"/>
</g>
<!-- beard -->
<g filter="url(#bl3)">
<path d="M1346 758 C1352 754 1362 752 1372 754 C1382 756 1390 760 1398 758 C1404 748 1408 738 1412 734 C1416 748 1416 764 1413 772 C1410 784 1404 792 1392 797 L1376 801 L1362 798 C1354 792 1349 784 1347 774 Z" fill="#6c5246"/>
</g>
<g clip-path="url(#beardclip)">
<rect x="1340" y="730" width="80" height="75" filter="url(#noise)" opacity="0.35"/>
<g filter="url(#bl4)">
<path d="M1349 770 C1354 786 1364 796 1378 799 C1384 790 1378 778 1366 770 C1360 766 1352 765 1349 770Z" fill="#a09288" opacity="0.75"/>
<path d="M1382 792 C1394 784 1404 774 1412 766 L1408 790 L1390 800Z" fill="#4e382e" opacity="0.8"/>
<ellipse cx="1386" cy="770" rx="10" ry="6" fill="#7c6052" opacity="0.6"/>
</g>
</g>
<g filter="url(#bl3)">
<ellipse cx="1366" cy="762.5" rx="6.5" ry="3" fill="#d4b8aa"/>
<path d="M1360 762.5 C1364 761 1369 761 1373 762.5" stroke="#4a2a22" stroke-width="1.4" fill="none"/>
<path d="M1354 757 C1362 754 1372 754 1382 759" stroke="#7a5444" stroke-width="2.2" fill="none"/>
</g>
</g>
<path d="M1360 704 L1366 694 L1383 686.5 L1405 690 L1420 701 L1429 718 L1431 730 L1427 748 L1417 768 L1412 780 L1406 785 L1392 797 L1376 800.5 L1363 798 L1354 790 L1348 778 L1346.8 764 L1347 752 L1349 738 L1354 716 Z" fill="none" stroke="#5f6a4c" stroke-width="1" opacity="0.7"/>
</svg>

</body></html>
